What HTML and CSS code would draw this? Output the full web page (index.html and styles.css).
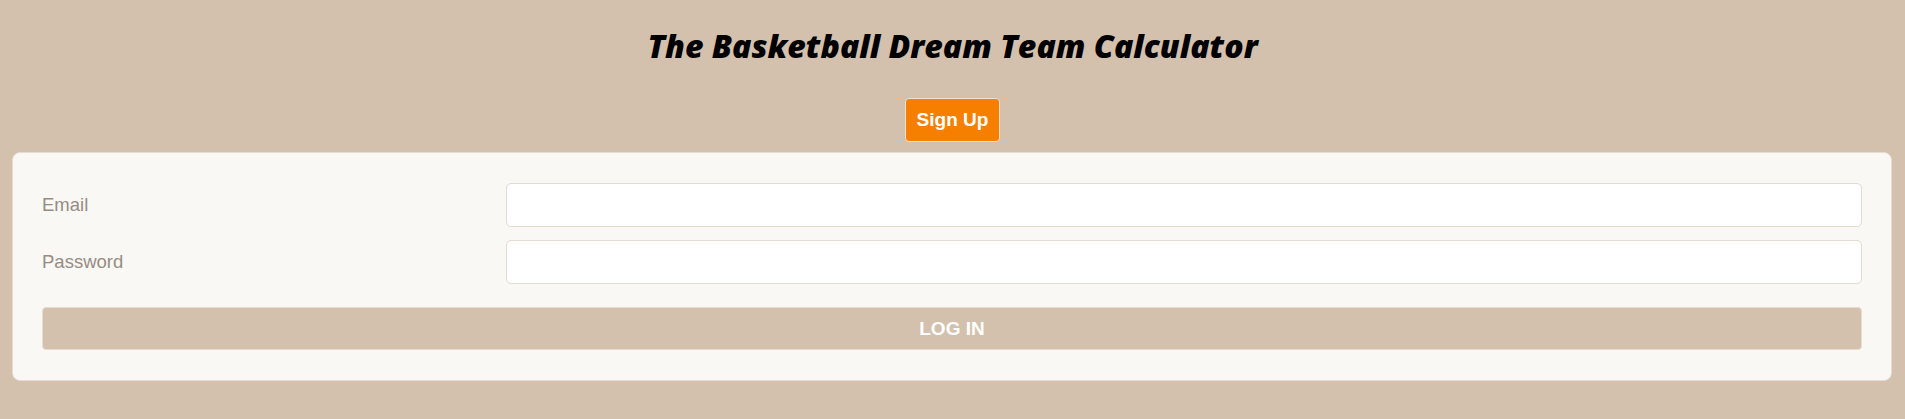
FILE: index.html
```html
<!DOCTYPE html>
<html>
<head>
<meta charset="utf-8">
<title>The Basketball Dream Team Calculator</title>
<link rel="stylesheet" href="styles.css">
</head>
<body>
<header class="header">
  <h1 class="title">The Basketball Dream Team Calculator</h1>
  <button class="signup" type="button">Sign Up</button>
</header>
<main class="main">
  <form class="card">
    <div class="row">
      <label class="label" for="email">Email</label>
      <input class="input" id="email" type="email">
    </div>
    <div class="row">
      <label class="label" for="password">Password</label>
      <input class="input" id="password" type="password">
    </div>
    <button class="login" type="button">LOG IN</button>
  </form>
</main>
</body>
</html>
```
FILE: styles.css
```css
* { box-sizing: border-box; }
html, body { margin: 0; padding: 0; }
body {
  background: #d4c1ad;
  font-family: "Liberation Sans", Arial, sans-serif;
  height: 419px;
}
.header {
  display: flex;
  flex-direction: column;
  align-items: center;
  padding-top: 24px;
}
.title {
  margin: 0;
  font-family: "Open Sans", sans-serif;
  font-weight: 800;
  font-style: italic;
  font-size: 32px;
  line-height: 44px;
  color: #000;
}
.signup {
  margin-top: 30px;
  width: 95px;
  height: 44px;
  background: #f77f00;
  color: #fff;
  border: 1px solid #eee0d2;
  border-radius: 4px;
  font-family: "Liberation Sans", Arial, sans-serif;
  font-weight: 700;
  font-size: 19px;
  padding: 0;
}
.main {
  padding: 10px 13px 0 12px;
}
.card {
  margin: 0;
  background: #f9f8f5;
  border: 1px solid #e6dcd2;
  border-radius: 8px;
  padding: 30px 29px 30px 29px;
  display: flex;
  flex-direction: column;
  gap: 13px;
}
.row {
  display: grid;
  grid-template-columns: 464px 1fr;
  align-items: center;
}
.label {
  font-size: 18.5px;
  color: #978c84;
}
.input {
  height: 44px;
  border: 1px solid #e3dad1;
  border-radius: 5px;
  background: #fff;
  width: 100%;
  font-size: 16px;
}
.login {
  margin-top: 10px;
  height: 43px;
  width: 100%;
  background: #d4c1ad;
  border: 1px solid #e6dbd1;
  border-radius: 4px;
  color: #fff;
  font-family: "Liberation Sans", Arial, sans-serif;
  font-weight: 700;
  font-size: 19px;
  padding: 0;
}
```
